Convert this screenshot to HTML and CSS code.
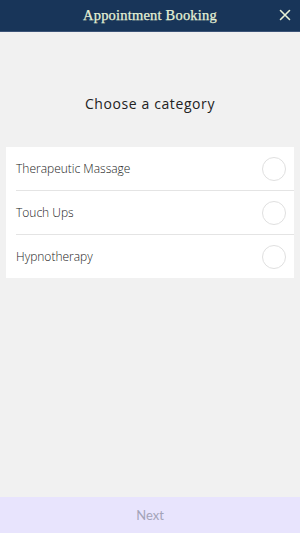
FILE: index.html
```html
<!DOCTYPE html>
<html>
<head>
<meta charset="utf-8">
<link rel="stylesheet" href="styles.css">
</head>
<body>
<div class="app">
  <header class="topbar">
    <span class="title">Appointment Booking</span>
    <span class="close">
      <svg width="12" height="12" viewBox="0 0 12 12"><path d="M1.5 1.5 L10.5 10.5 M10.5 1.5 L1.5 10.5" stroke="#e6f2d6" stroke-width="1.6" stroke-linecap="round"/></svg>
    </span>
  </header>
  <main class="content">
    <h1 class="heading">Choose a category</h1>
    <ul class="list">
      <li class="item"><span class="label">Therapeutic Massage</span><span class="radio"></span></li>
      <li class="item"><span class="label">Touch Ups</span><span class="radio"></span></li>
      <li class="item"><span class="label">Hypnotherapy</span><span class="radio"></span></li>
    </ul>
  </main>
  <footer class="next">Next</footer>
</div>
</body>
</html>
```
FILE: styles.css
```css
html, body {
  margin: 0;
  padding: 0;
  height: 100%;
}
body {
  background: #f1f1f1;
  font-family: "Open Sans", sans-serif;
}
.app {
  height: 533px;
  display: flex;
  flex-direction: column;
}
.topbar {
  position: relative;
  height: 31px;
  background: #183559;
  border-bottom: 1px solid #3d5478;
  display: flex;
  align-items: center;
  justify-content: center;
}
.title {
  font-family: "Liberation Serif", serif;
  font-size: 14.5px;
  color: #e6f2d6;
  letter-spacing: 0.2px;
  -webkit-text-stroke: 0.25px #e6f2d6;
}
.close {
  position: absolute;
  right: 9px;
  top: 9px;
  width: 12px;
  height: 12px;
  display: flex;
}
.content {
  flex: 1;
  padding: 0 6px;
}
.heading {
  margin: 62px 0 0 0;
  height: 20px;
  line-height: 20px;
  text-align: center;
  font-weight: 400;
  font-size: 14px;
  letter-spacing: 0.6px;
  color: #222;
}
.list {
  list-style: none;
  margin: 33px 0 0 0;
  padding: 0;
  background: #fff;
}
.item {
  height: 43px;
  display: flex;
  align-items: center;
  justify-content: space-between;
  margin-left: 10px;
  padding-right: 8px;
  border-bottom: 1px solid #e4e4e4;
}
.item:last-child {
  border-bottom: none;
}
.label {
  font-size: 12px;
  font-weight: 300;
  color: #222;
}
.radio {
  width: 22px;
  height: 22px;
  border: 1px solid #e0e0e0;
  border-radius: 50%;
}
.next {
  height: 36px;
  background: #e8e4fd;
  display: flex;
  align-items: center;
  justify-content: center;
  font-family: Lato, sans-serif;
  font-size: 13px;
  color: #a3a3b8;
}
```
